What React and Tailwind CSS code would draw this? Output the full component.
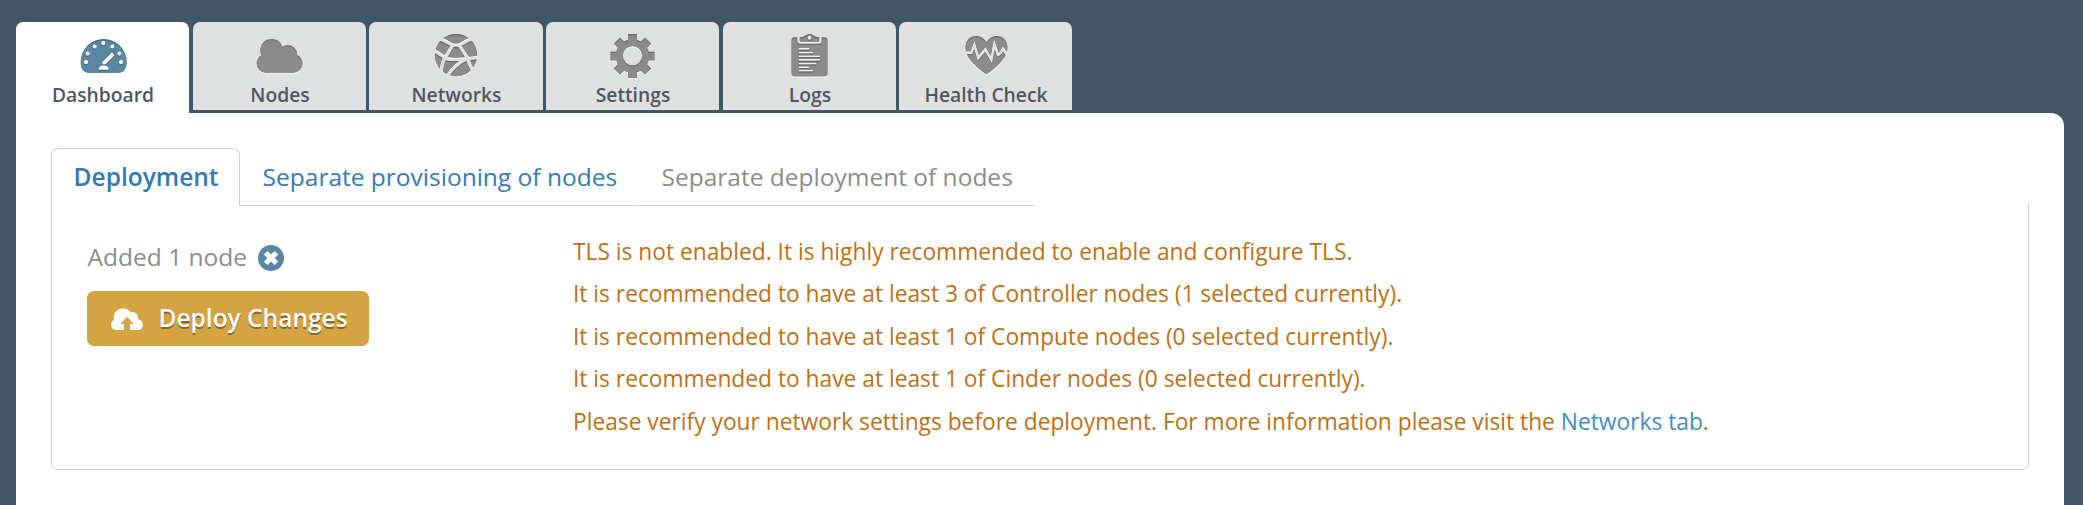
import React from 'react';

function Engraved({ id, color, dark, light, children }) {
  return (
    <svg width="60" height="59" viewBox="0 0 180 177" className="block" aria-hidden="true">
      <defs>
        <mask id={id} maskUnits="userSpaceOnUse" x="0" y="0" width="180" height="177">
          {children}
        </mask>
      </defs>
      <g transform="translate(0 5)">
        <rect width="180" height="172" fill={light} mask={`url(#${id})`} />
      </g>
      <rect width="180" height="177" fill={dark} mask={`url(#${id})`} />
      <g mask={`url(#${id})`}>
        <g transform="translate(0 4)">
          <rect width="180" height="172" fill={color} mask={`url(#${id})`} />
        </g>
      </g>
    </svg>
  );
}

const GRAY = { color: '#8b8b8b', dark: '#6b6b6b', light: '#eef0ef' };
const BLUE = { color: '#5a88a4', dark: '#426780', light: '#ffffff' };

function DashboardIcon() {
  const dots = [[91, 63], [65, 73], [118, 73], [44, 94], [139, 94], [39, 120], [144, 120]];
  return (
    <Engraved id="dash" {...BLUE}>
      <path d="M23 120a69 69 0 0 1 138 0c0 20-8 32-26 32H49c-18 0-26-12-26-32z" fill="#fff" />
      {dots.map(([x, y]) => (
        <circle key={`${x}-${y}`} cx={x} cy={y} r="6.5" fill="#000" />
      ))}
      <path d="M88 119L117 91L125 99L98 126Q92 129 88 125z" fill="#000" />
      <path d="M76 143q2-13 16-13t16 13z" fill="#000" />
    </Engraved>
  );
}

function CloudIcon() {
  return (
    <Engraved id="cloud" {...GRAY}>
      <g fill="#fff">
        <circle cx="65" cy="85" r="34" />
        <circle cx="114" cy="96" r="27" />
        <circle cx="48" cy="124" r="28" />
        <circle cx="130" cy="124" r="27.5" />
        <path d="M48 90h82v62H48z" />
      </g>
    </Engraved>
  );
}

function NetworkIcon() {
  return (
    <Engraved id="net" {...GRAY}>
      <circle cx="90" cy="99" r="63.5" fill="#fff" />
      <g fill="none" stroke="#000" strokeWidth="11" strokeLinejoin="round" strokeLinecap="round">
        <path d="M30 46Q56 54 80 69H100Q122 54 150 46" />
        <path d="M79 71Q70 86 58 106Q40 96 18 80" />
        <path d="M101 71Q110 86 125 108" />
        <path d="M57 106Q46 126 46 152" />
        <path d="M58 109Q92 116 160 105" />
        <path d="M124 109Q86 126 64 162" />
        <path d="M125 109Q130 130 144 150" />
      </g>
    </Engraved>
  );
}

function GearIcon() {
  return (
    <Engraved id="gear" {...GRAY}>
      <circle cx="88.5" cy="102" r="50" fill="#fff" />
      {[0, 45, 90, 135, 180, 225, 270, 315].map((a) => (
        <path key={a} d="M75.5 36h26v24h-26z" fill="#fff" transform={`rotate(${a} 88.5 102)`} />
      ))}
      <circle cx="88.5" cy="101" r="29" fill="#000" />
    </Engraved>
  );
}

function LogsIcon() {
  const rows = [[78, 33], [89, 44], [100, 65], [111, 65], [122, 54], [133, 33], [143, 44]];
  return (
    <Engraved id="logs" {...GRAY}>
      <rect x="34.5" y="46" width="108" height="117" rx="9" fill="#fff" />
      <path d="M52 36h73v22q0 7-7 7H59q-7 0-7-7z" fill="#000" />
      <path d="M59 46q10 0 18-6q11-8 23 0q8 6 18 6v9q0 4-4 4H63q-4 0-4-4z" fill="#fff" />
      <circle cx="88.5" cy="47" r="6" fill="#000" />
      {rows.map(([y, w]) => (
        <path key={y} d={`M55.5 ${y}h${w}v5h-${w}z`} fill="#000" />
      ))}
    </Engraved>
  );
}

function HealthIcon() {
  return (
    <Engraved id="health" {...GRAY}>
      <path d="M91.500 157C70 140 28.500 112 28.500 75C28.500 56 43 42 60 42C74 42 85 50 91.500 61C98 50 109 42 123 42C140 42 154.500 56 154.500 75C154.500 112 113 140 91.500 157z" fill="#fff" />
      <path d="M26 92H46L55 69L67 107L88 82L106 113L115 66L126 98L134 93L141 80L150 94H158" fill="none" stroke="#000" strokeWidth="8" />
    </Engraved>
  );
}

function CloudUploadIcon() {
  return (
    <svg width="32" height="22" viewBox="0 0 96 66" className="block" aria-hidden="true">
      <mask id="up">
        <g fill="#fff">
          <circle cx="36" cy="29" r="28" />
          <circle cx="65" cy="28" r="16" />
          <circle cx="16" cy="50" r="16" />
          <circle cx="80" cy="50" r="16" />
          <path d="M16 30h64v36H16z" />
        </g>
        <path d="M48 26L68 48H57V66H39V48H28z" fill="#000" />
      </mask>
      <rect width="96" height="66" fill="#fff" mask="url(#up)" />
    </svg>
  );
}

function RemoveIcon() {
  return (
    <svg width="26" height="26" viewBox="0 0 78 78" className="block" aria-hidden="true">
      <circle cx="39" cy="39" r="39" fill="#5a88a4" />
      <path d="M23 23L55 55M55 23L23 55" stroke="#fff" strokeWidth="15" />
    </svg>
  );
}

const tabs = [
  { label: 'Dashboard', Icon: DashboardIcon, cls: 'h-[91px] w-[173px] mr-1 bg-white' },
  { label: 'Nodes', Icon: CloudIcon, cls: 'h-[88px] w-[173px] mr-[3px] bg-[#dfe1e0]' },
  { label: 'Networks', Icon: NetworkIcon, cls: 'h-[88px] w-[174px] mr-[3px] bg-[#dfe1e0]' },
  { label: 'Settings', Icon: GearIcon, cls: 'h-[88px] w-[173px] mr-1 bg-[#dfe1e0]' },
  { label: 'Logs', Icon: LogsIcon, cls: 'h-[88px] w-[173px] mr-[3px] bg-[#dfe1e0]' },
  { label: 'Health Check', Icon: HealthIcon, cls: 'h-[88px] w-[173px] bg-[#dfe1e0]' },
];

const warnings = [
  'TLS is not enabled. It is highly recommended to enable and configure TLS.',
  'It is recommended to have at least 3 of Controller nodes (1 selected currently).',
  'It is recommended to have at least 1 of Compute nodes (0 selected currently).',
  'It is recommended to have at least 1 of Cinder nodes (0 selected currently).',
];

export default function App() {
  return (
    <div className="flex h-[505px] w-full flex-col overflow-hidden bg-[#415766] pl-4 pr-[19px] pt-[22px] font-['Open_Sans',sans-serif]">
      <nav className="flex h-[91px] items-start">
        {tabs.map(({ label, Icon, cls }) => (
          <a key={label} className={`flex flex-col items-center rounded-t-[7px] ${cls}`}>
            <Icon />
            <span className="whitespace-nowrap pl-px text-[19.25px] font-semibold leading-[27px] text-[#4f5763]">{label}</span>
          </a>
        ))}
      </nav>
      <main className="flex-1 rounded-tr-[13px] bg-white px-[35px] pt-[35px]">
        <div className="flex h-[58px] text-[24.5px]">
          <a className="w-[189px] rounded-t-[7px] border border-b-0 border-[#d1d1d1] pl-[21.6px] font-semibold leading-[56px] text-[#337ab7]">Deployment</a>
          <a className="mr-px w-[399px] whitespace-nowrap border-b border-[#d1d1d1] pl-[22.6px] leading-[57px] text-[#337ab7]">Separate provisioning of nodes</a>
          <a className="w-[395px] whitespace-nowrap border-b border-[#d1d1d1] pl-[21.5px] leading-[57px] text-[#8b8b8b]">Separate deployment of nodes</a>
        </div>
        <section className="-mt-[2px] flex h-[266px] rounded-b-[7px] border border-t-0 border-[#d1d1d1] pl-[35px]">
          <div className="w-[486px] pt-[36px]">
            <div className="flex h-[34px] items-center">
              <span className="pl-[0.6px] text-[24.5px] leading-[34px] text-[#8b8b8b]">Added 1 node</span>
              <span className="ml-[11px] mt-[2px]"><RemoveIcon /></span>
            </div>
            <button className="mt-[17px] flex h-[55px] w-[282px] items-center rounded-[7px] bg-[#d3a441] pl-6 text-white">
              <CloudUploadIcon />
              <span className="-mt-[2px] ml-[15.5px] whitespace-nowrap text-[24.5px] font-semibold leading-[35px] [text-shadow:0_1.75px_0_rgba(0,0,0,0.4)]">Deploy Changes</span>
            </button>
          </div>
          <div className="pt-[26.5px] text-[22.75px] leading-[42.5px] text-[#bf6f14]">
            {warnings.map((w) => (
              <p key={w}>{w}</p>
            ))}
            <p>
              Please verify your network settings before deployment. For more information please visit the{' '}
              <a className="text-[#428bca]">Networks tab</a>.
            </p>
          </div>
        </section>
      </main>
    </div>
  );
}
